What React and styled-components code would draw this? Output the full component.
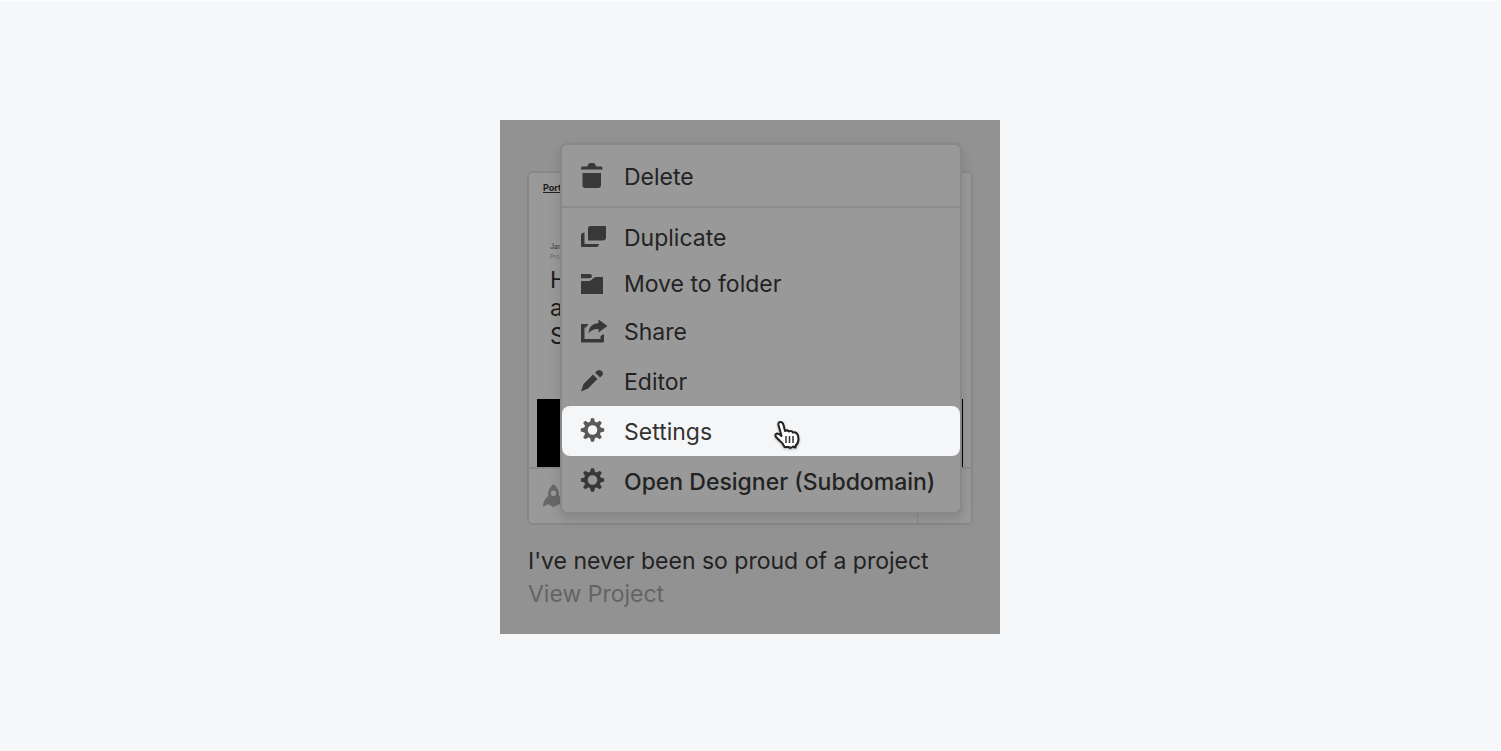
import React from 'react';
import styled, { createGlobalStyle } from 'styled-components';

const GlobalStyle = createGlobalStyle`
  *, *::before, *::after { box-sizing: border-box; }
  body { margin: 0; background: #f5f7f9; font-family: Inter, "Open Sans", sans-serif; }
`;

const Page = styled.main`
  display: flex;
  justify-content: center;
  align-items: flex-start;
  min-height: 100vh;
  padding: 119px 16px 16px;
  background: #f5f7f9;
  border-top: 1px solid #fdfdfe;
  border-right: 1px solid #fdfdfe;
`;

const Stage = styled.section`
  position: relative;
  width: 100%;
  max-width: 500px;
  padding: 51px 27px 23px;
  background: #929292;
`;

const Card = styled.article`
  border: 2px solid #888;
  border-radius: 5px;
  background: #999;
`;

const Preview = styled.div`
  display: flex;
  flex-direction: column;
  height: 294px;
  padding: 10px 8px 0;
  color: #1c1c1c;
`;

const SiteLogo = styled.span`
  align-self: flex-start;
  margin-left: 6px;
  border-bottom: 1px solid #222;
  font-size: 9px;
  line-height: 9px;
  font-weight: 700;
`;

const SiteMeta = styled.div`
  margin: 48px 0 0 13px;
  font-size: 7px;
  line-height: 11px;
  color: #3a3a3a;
`;

const MetaSub = styled.div`
  font-size: 6px;
  line-height: 10px;
  color: #6b6b6b;
`;

const SiteTitle = styled.div`
  margin: 4px 0 0 13px;
  font-size: 23px;
  font-weight: 400;
  line-height: 28px;
`;

const SiteImage = styled.div`
  height: 68px;
  margin-top: auto;
  background: #000;
`;

const CardFooter = styled.div`
  display: flex;
  height: 56px;
  border-top: 2px solid #8a8a8a;
`;

const FooterStatus = styled.div`
  flex: 1;
  padding: 15px 14px;
`;

const FooterMore = styled.div`
  width: 54px;
  border-left: 1px solid #868686;
`;

const ProjectName = styled.h1`
  margin: 20px 0 0 1px;
  font-size: 23px;
  line-height: 33px;
  font-weight: 400;
  color: #222;
`;

const ProjectLink = styled.a`
  display: block;
  margin-left: 1px;
  font-size: 23px;
  line-height: 33px;
  color: #646464;
  text-decoration: none;
`;

const Menu = styled.div`
  position: absolute;
  top: 23px;
  left: 60px;
  right: 38px;
  padding-bottom: 6px;
  border: 2px solid #888;
  border-radius: 7px;
  background: #999;
  box-shadow: 0 5px 12px rgba(0, 0, 0, 0.13);
`;

const MenuItem = styled.button`
  display: flex;
  align-items: center;
  gap: 16px;
  width: 100%;
  height: ${(p) => (p.$compact ? 46 : 50)}px;
  padding: 0 18px;
  border: 0;
  border-radius: 8px;
  background: ${(p) => (p.$active ? '#f5f6f8' : 'transparent')};
  color: ${(p) => (p.$active ? '#333' : '#232323')};
  font-family: inherit;
  font-size: 23px;
  font-weight: ${(p) => (p.$strong ? 500 : 400)};
  line-height: 32px;
  text-align: left;
  white-space: nowrap;
  cursor: pointer;
`;

const Label = styled.span`
  padding-top: 2px;
`;

const MenuGroup = styled.div`
  padding: ${(p) => (p.$first ? '6px 0 5px' : '6px 0 0')};
  border-bottom: ${(p) => (p.$first ? '2px solid #8c8c8c' : '0')};
`;

const Glyph = styled.svg`
  flex: none;
  width: 28px;
  height: 28px;
  fill: ${(p) => (p.$light ? '#5a5a5a' : '#383838')};
`;

const Pointer = styled.svg`
  position: absolute;
  top: 299px;
  left: 273px;
  width: 30px;
  height: 34px;
  pointer-events: none;
  filter: drop-shadow(0 1px 1px rgba(0, 0, 0, 0.3));
`;

const gearTeeth = [0, 45, 90, 135, 180, 225, 270, 315];

const shapes = {
  trash: (
    <>
      <path d="M1 7.500V6Q1 4.500 2.500 4.500H7.500Q8 1 10.500 1H13Q15.500 1 16 4.500H21Q22.500 4.500 22.500 6V7.500Z" />
      <path d="M2.500 11H21V23Q21 26 18 26H5.500Q2.500 26 2.500 23Z" />
    </>
  ),
  duplicate: (
    <>
      <path d="M10.500 3H26V14.500Q26 17.500 22.500 17.500H8V5.500Q8 3 10.500 3Z" />
      <path d="M1 12.500Q1 9.500 4.500 9.500V21H19Q19 24 16 24H1Z" />
    </>
  ),
  folder: (
    <>
      <path d="M1 5H9.500Q12 5 12 7Q12 9.200 9.500 9.200H1Z" />
      <path d="M1 12H8.500Q11 12 12.500 10Q14 8 16 8H23V25H1Z" />
    </>
  ),
  share: (
    <>
      <path d="M1 8Q1 7 2 7H8.500L6 10.500H4.500V22H20.500V19L24 17V24.500Q24 25.500 23 25.500H2Q1 25.500 1 24.500Z" />
      <path d="M18.500 2.500L27.500 9L18.500 15.500V12Q12 11.500 8.500 16.500Q8.500 7 18.500 6Z" />
    </>
  ),
  pencil: (
    <>
      <path d="M1 24.500L3.500 17L13 7.500L17.500 12L8 21.500Z" />
      <path d="M15 5.500L17.500 3.500Q19.500 2 21.800 4.200Q24 6.500 22 8.700L20 10.500Z" />
    </>
  ),
  gear: (
    <>
      <path
        fillRule="evenodd"
        d="M12.500 4.500A8.500 8.500 0 1 1 12.500 21.500A8.500 8.500 0 1 1 12.500 4.500ZM12.500 8.200A4.800 4.800 0 1 0 12.500 17.800A4.800 4.800 0 1 0 12.500 8.200Z"
      />
      {gearTeeth.map((a) => (
        <path key={a} d="M9.800 6L11 1.300H14L15.200 6Z" transform={`rotate(${a} 12.500 13)`} />
      ))}
    </>
  ),
};

function Icon({ name, light }) {
  return (
    <Glyph viewBox="0 0 28 28" $light={light} aria-hidden="true">
      {shapes[name]}
    </Glyph>
  );
}

const RocketGlyph = styled.svg`
  display: block;
  width: 24px;
  height: 25px;
  fill: #686868;
`;

function Rocket() {
  return (
    <RocketGlyph viewBox="0 0 24 25" aria-hidden="true">
      <path
        fillRule="evenodd"
        d="M10.500 0Q16.500 4.500 16 12Q21 16 21 23L16 20L14 21.500H12.500L10.500 23.500L8.500 21.500H7L5 20L0 23Q0 16 5 12Q4.500 4.500 10.500 0ZM10.500 6.500A2.700 2.700 0 1 0 10.500 11.900A2.700 2.700 0 1 0 10.500 6.500Z"
      />
    </RocketGlyph>
  );
}

const actions = [
  { icon: 'duplicate', label: 'Duplicate', compact: true },
  { icon: 'folder', label: 'Move to folder', compact: true },
  { icon: 'share', label: 'Share' },
  { icon: 'pencil', label: 'Editor' },
  { icon: 'gear', label: 'Settings', active: true },
  { icon: 'gear', label: 'Open Designer (Subdomain)', strong: true },
];

export default function App() {
  return (
    <Page>
      <GlobalStyle />
      <Stage>
        <Card>
          <Preview>
            <SiteLogo>Port</SiteLogo>
            <SiteMeta>
              Jan
              <MetaSub>Proj</MetaSub>
            </SiteMeta>
            <SiteTitle>
              H<br />a<br />S
            </SiteTitle>
            <SiteImage />
          </Preview>
          <CardFooter>
            <FooterStatus>
              <Rocket />
            </FooterStatus>
            <FooterMore />
          </CardFooter>
        </Card>
        <ProjectName>I've never been so proud of a project</ProjectName>
        <ProjectLink href="#project">View Project</ProjectLink>
        <Menu role="menu" aria-label="Project actions">
          <MenuGroup $first>
            <MenuItem role="menuitem">
              <Icon name="trash" />
              <Label>Delete</Label>
            </MenuItem>
          </MenuGroup>
          <MenuGroup>
            {actions.map((a) => (
              <MenuItem
                key={a.label}
                role="menuitem"
                $compact={a.compact}
                $active={a.active}
                $strong={a.strong}
              >
                <Icon name={a.icon} light={a.active} />
                <Label>{a.label}</Label>
              </MenuItem>
            ))}
          </MenuGroup>
        </Menu>
        <Pointer viewBox="0 0 30 34" aria-hidden="true">
          <path
            d="M8.500 17L5.500 6Q5 3 7.500 3Q9.700 3 10.500 6L12 12Q14 10.500 16 12.500Q18.500 11 20 13.500Q23.500 12.500 25 16.500L25.500 20Q25.500 24 22.500 27V28.500L20 27.500L17.500 29L15.500 28H11.500Q10.500 24.500 7 22L3 18Q1.500 15 4 14.500Q6 14.500 8.500 17Z"
            fill="#fff"
            stroke="#222"
            strokeWidth="2"
            strokeLinejoin="round"
          />
          <path d="M13 17V24M16.500 17V24M20 17V24" fill="none" stroke="#333" strokeWidth="1.500" />
        </Pointer>
      </Stage>
    </Page>
  );
}
